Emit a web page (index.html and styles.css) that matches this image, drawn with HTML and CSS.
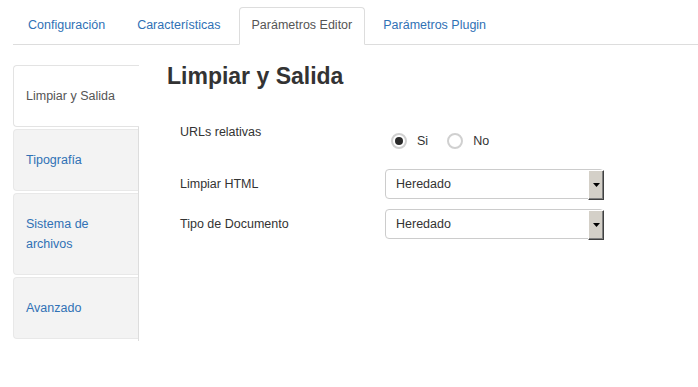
FILE: index.html
```
<!DOCTYPE html>
<html lang="es">
<head>
<meta charset="utf-8">
<title>Parámetros Editor</title>
<link rel="stylesheet" href="styles.css">
</head>
<body>
<ul class="tabs">
  <li class="tab">Configuración</li>
  <li class="tab">Características</li>
  <li class="tab active">Parámetros Editor</li>
  <li class="tab">Parámetros Plugin</li>
</ul>
<div class="layout">
  <ul class="side">
    <li class="side-item active">Limpiar y Salida</li>
    <li class="side-item">Tipografía</li>
    <li class="side-item">Sistema de archivos</li>
    <li class="side-item">Avanzado</li>
  </ul>
  <div class="main">
    <h1 class="title">Limpiar y Salida</h1>
    <div class="form">
      <div class="row row-radio">
        <div class="label">URLs relativas</div>
        <div class="radios">
          <span class="opt"><span class="radio checked"></span>Si</span>
          <span class="opt"><span class="radio"></span>No</span>
        </div>
      </div>
      <div class="row">
        <div class="label">Limpiar HTML</div>
        <div class="select"><span class="value">Heredado</span><span class="btn"><svg width="7" height="4" viewBox="0 0 7 4"><path d="M0 0H7L3.5 4Z" fill="#000"/></svg></span></div>
      </div>
      <div class="row">
        <div class="label">Tipo de Documento</div>
        <div class="select"><span class="value">Heredado</span><span class="btn"><svg width="7" height="4" viewBox="0 0 7 4"><path d="M0 0H7L3.5 4Z" fill="#000"/></svg></span></div>
      </div>
    </div>
  </div>
</div>
</body>
</html>
```
FILE: styles.css
```
* { box-sizing: border-box; }
body {
  margin: 0;
  background: #fff;
  font-family: "Liberation Sans", Arial, sans-serif;
  font-size: 12.5px;
  color: #333;
}
ul { list-style: none; margin: 0; padding: 0; }

.tabs {
  display: flex;
  margin: 7px 0 0 13px;
  padding-left: 2px;
  border-bottom: 1px solid #ddd;
}
.tab {
  height: 38px;
  line-height: 35px;
  padding: 0 12px;
  margin-right: 6px;
  margin-bottom: -1px;
  border: 1px solid transparent;
  border-radius: 4px 4px 0 0;
  color: #3071b5;
}
.tab.active {
  background: #fff;
  border-color: #ddd #ddd transparent;
  color: #555;
  margin-left: -1px;
  margin-right: 5px;
}

.layout {
  display: flex;
  align-items: flex-start;
  margin-top: 20px;
  padding-left: 13px;
}
.side {
  width: 126px;
  flex: none;
  border-right: 1px solid #ddd;
}
.side-item {
  padding: 20px 12px;
  line-height: 20px;
  background: #f3f3f3;
  border: 1px solid #e8e8e8;
  border-right: none;
  border-radius: 4px 0 0 4px;
  margin-bottom: 2px;
  color: #3071b5;
}
.side-item.active {
  background: #fff;
  border-color: #e3e3e3;
  margin-right: -1px;
  color: #555;
}

.main {
  flex: 1;
  padding-left: 28px;
}
.title {
  margin: 0 0 36px;
  font-size: 23px;
  line-height: 22px;
  font-weight: bold;
  color: #333;
}
.form { padding-left: 13px; }
.row {
  display: flex;
  align-items: center;
  margin-bottom: 10px;
}
.row-radio { align-items: flex-start; }
.label {
  width: 205px;
  flex: none;
  line-height: 18px;
}
.radios {
  display: flex;
  padding: 10px 0 10px 6px;
}
.opt {
  display: inline-flex;
  align-items: center;
  gap: 10px;
  margin-right: 19px;
  line-height: 16px;
}
.radio {
  width: 16px;
  height: 16px;
  border-radius: 50%;
  border: 2px solid #d0d0d0;
  background: #fff;
  display: inline-flex;
  align-items: center;
  justify-content: center;
}
.radio.checked::after {
  content: "";
  width: 8px;
  height: 8px;
  border-radius: 50%;
  background: #2b2b2b;
}
.select {
  display: flex;
  width: 219px;
  height: 30px;
  border: 1px solid #ccc;
  border-radius: 4px;
}
.value {
  flex: 1;
  line-height: 28px;
  padding-left: 10px;
  color: #333;
}
.btn {
  width: 16px;
  margin: 0 -1px -2px 0;
  display: flex;
  align-items: center;
  justify-content: center;
  background: #d4d0c8;
  border: 1px solid;
  border-color: #fff #404040 #404040 #fff;
  box-shadow: inset -1px -1px 0 #808080;
}
.btn svg { display: block; }
```
